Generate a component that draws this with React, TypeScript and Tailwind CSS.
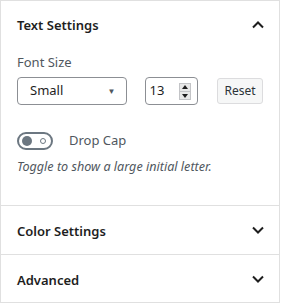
import React, { useState } from 'react';

const ChevronUp: React.FC = () => (
  <svg width="24" height="24" viewBox="0 0 24 24" className="text-[#1e1e1e]">
    <path d="M7 14.5l5-5 5 5" fill="none" stroke="currentColor" strokeWidth="2" />
  </svg>
);

const ChevronDown: React.FC = () => (
  <svg width="24" height="24" viewBox="0 0 24 24" className="text-[#1e1e1e]">
    <path d="M7 9.5l5 5 5-5" fill="none" stroke="currentColor" strokeWidth="2" />
  </svg>
);

const PanelHeader: React.FC<{ title: string; open?: boolean }> = ({ title, open }) => (
  <div className="h-12 flex items-center justify-between pl-4 pr-[9px]">
    <span className="text-[13px] font-semibold text-[#1e1e1e] mt-[2px]">{title}</span>
    {open ? <ChevronUp /> : <ChevronDown />}
  </div>
);

export default function App() {
  const [dropCap, setDropCap] = useState(false);

  return (
    <div
      className="w-[280px] h-[303px] bg-white border border-[#e0e0e0]"
      style={{ fontFamily: '"Noto Sans", "Open Sans", sans-serif' }}
    >
      {/* Text Settings */}
      <div>
        <PanelHeader title="Text Settings" open />
        <div className="px-4 pb-[29px]">
          <div className="text-[13px] leading-5 text-[#50575e] mt-[3px] mb-[5px]">Font Size</div>
          <div className="flex items-center">
            <div className="w-[110px] h-[28px] border border-[#8c8f94] rounded-[4px] flex items-center justify-between pl-3 pr-[10px]">
              <span className="text-[13px] text-[#1e1e1e]">Small</span>
              <span className="text-[8px] text-[#50575e]">▼</span>
            </div>
            <div className="ml-[18px] w-[54px] h-[28px] border border-[#8c8f94] rounded-[4px] flex items-center justify-between pl-[4px] pr-[6px]">
              <span className="text-[13px] text-[#1e1e1e]">13</span>
              <div className="w-[12px] h-[17px] bg-[#e8e8e8] border border-[#c3c4c7] flex flex-col items-center justify-around">
                <span className="w-0 h-0 border-l-[3px] border-r-[3px] border-b-[4px] border-l-transparent border-r-transparent border-b-[#1e1e1e]" />
                <span className="w-full h-px bg-[#c3c4c7]" />
                <span className="w-0 h-0 border-l-[3px] border-r-[3px] border-t-[4px] border-l-transparent border-r-transparent border-t-[#1e1e1e]" />
              </div>
            </div>
            <button className="ml-[19px] w-[46px] h-[26px] bg-[#f6f7f7] border border-[#dcdcde] rounded-[3px] text-[12px] text-[#2c3338]">
              Reset
            </button>
          </div>

          <div className="flex items-center mt-[26px]">
            <button
              onClick={() => setDropCap(!dropCap)}
              className="w-[36px] h-[18px] rounded-full border-2 border-[#6c7781] flex items-center px-[3px] justify-between"
            >
              <span className="w-[10px] h-[10px] rounded-full bg-[#6c7781]" />
              <span className="w-[6px] h-[6px] rounded-full border-[1.5px] border-[#6c7781] mr-[2px]" />
            </button>
            <span className="ml-4 text-[13px] text-[#50575e]">Drop Cap</span>
          </div>
          <p className="mt-[7px] text-[12.6px] italic text-[#50575e]">Toggle to show a large initial letter.</p>
        </div>
      </div>

      <div className="border-t border-[#e0e0e0]">
        <PanelHeader title="Color Settings" />
      </div>
      <div className="border-t border-[#e0e0e0]">
        <PanelHeader title="Advanced" />
      </div>
    </div>
  );
}
